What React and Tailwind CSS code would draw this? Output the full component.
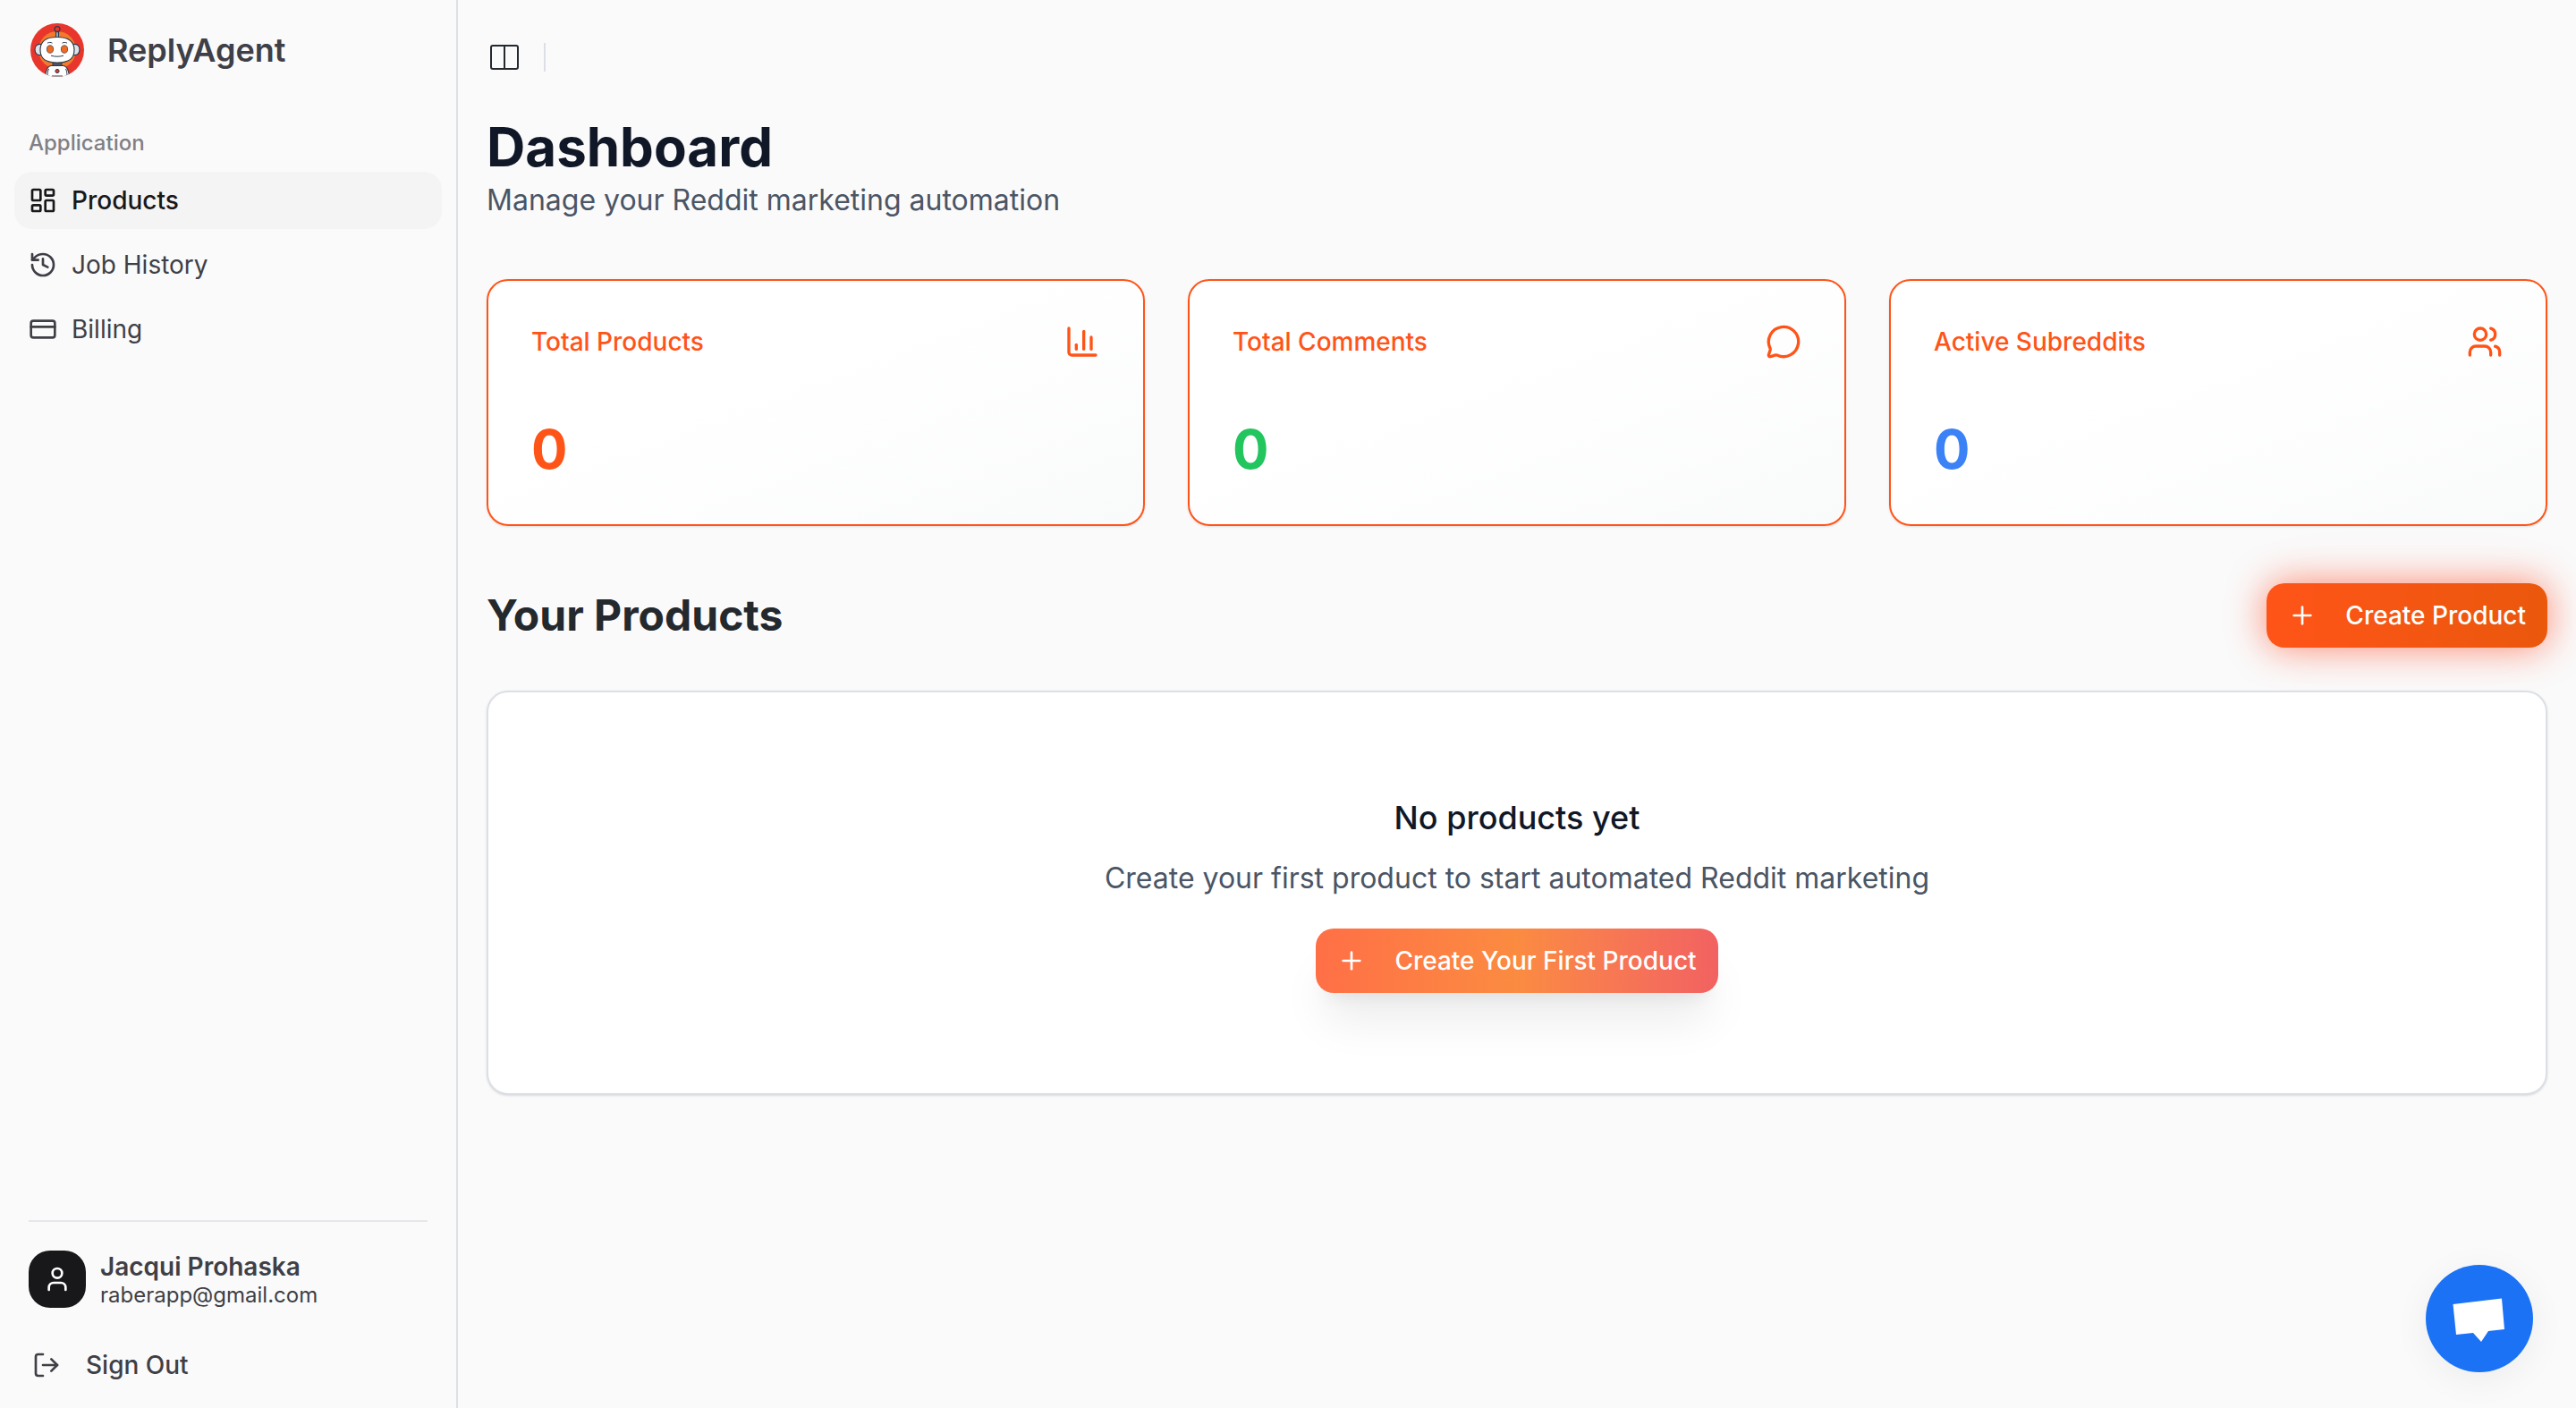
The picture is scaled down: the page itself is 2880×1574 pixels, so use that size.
import {
  ChartColumn,
  CreditCard,
  History,
  LayoutDashboard,
  LogOut,
  MessageCircle,
  Plus,
  User,
  Users,
} from 'lucide-react';

const navItems = [
  { title: 'Products', icon: LayoutDashboard, active: true },
  { title: 'Job History', icon: History },
  { title: 'Billing', icon: CreditCard },
];

const stats = [
  { title: 'Total Products', value: 0, icon: ChartColumn, color: 'text-[#ff5418]' },
  { title: 'Total Comments', value: 0, icon: MessageCircle, color: 'text-[#22c55e]' },
  { title: 'Active Subreddits', value: 0, icon: Users, color: 'text-[#3b82f6]' },
];

const Logo = () => (
  <svg className="size-16" viewBox="0 0 64 64" aria-hidden="true">
    <defs>
      <clipPath id="logo-clip">
        <circle cx="32" cy="32" r="30" />
      </clipPath>
    </defs>
    <g clipPath="url(#logo-clip)" stroke="#2f3a48">
      <rect width="64" height="64" fill="#e8362d" stroke="none" />
      <circle cx="32" cy="32" r="21" fill="#f37a2c" stroke="none" />
      <path d="M30.500 11h3v7h-3z" fill="#9aa5b1" strokeWidth="1" />
      <circle cx="32" cy="8.600" r="3" fill="#e8362d" strokeWidth="1.200" />
      <path d="M27 45h10v6H27z" fill="#4b5563" strokeWidth="1" />
      <path d="M18.500 64c0-8 2.500-14.500 7-14.500h13c4.500 0 7 6.500 7 14.500z" fill="#fff" strokeWidth="1.200" />
      <path d="M22.500 53c-1.500 3-1.500 6-1.500 10M41.500 53c1.500 3 1.500 6 1.500 10M26 61h12" fill="none" strokeWidth="1" />
      <circle cx="32" cy="55.500" r="2.100" fill="#e8362d" strokeWidth="1" />
      <path d="M14 25.500c-4-.5-7 1.500-7 6s3 6.500 7 6z" fill="#dfe3e8" strokeWidth="1.200" />
      <path d="M50 25.500c4-.5 7 1.500 7 6s-3 6.500-7 6z" fill="#dfe3e8" strokeWidth="1.200" />
      <path
        d="M32 17.500c13 0 19 4.500 19 14.500S45 46 32 46s-19-4-19-14 6-14.500 19-14.500z"
        fill="#fff"
        strokeWidth="1.200"
      />
      <ellipse cx="24" cy="31" rx="3.600" ry="4.200" fill="#f26a21" stroke="#6b5a58" strokeWidth="1" />
      <ellipse cx="40" cy="31" rx="3.600" ry="4.200" fill="#f26a21" stroke="#6b5a58" strokeWidth="1" />
      <path
        d="M21 24.200c1.500-1 4-1 5.500 0M37.500 24.200c1.500-1 4-1 5.500 0M25 38.200c4 1.300 10 1.300 14 0"
        fill="none"
        strokeWidth="1"
      />
    </g>
  </svg>
);

const Sidebar = () => (
  <aside className="flex w-128 shrink-0 flex-col border-r-2 border-[#dce0e6]">
    <div className="flex h-28 items-center gap-6 px-8">
      <Logo />
      <span className="text-4xl font-semibold text-zinc-700">ReplyAgent</span>
    </div>

    <nav className="flex flex-col p-4" aria-label="Application">
      <div className="flex h-16 items-center px-4 text-2xl font-medium text-[#808085]">Application</div>
      <ul className="flex flex-col gap-2">
        {navItems.map((item) => (
          <li key={item.title}>
            <a
              href="#"
              className={
                item.active
                  ? 'flex h-16 items-center gap-4 rounded-[20px] bg-zinc-100 px-4 text-[28px] font-medium text-zinc-900'
                  : 'flex h-16 items-center gap-4 rounded-[20px] px-4 text-[28px] text-zinc-700'
              }
            >
              <item.icon className="size-8" />
              {item.title}
            </a>
          </li>
        ))}
      </ul>
    </nav>

    <div className="mx-8 mt-auto flex flex-col border-t-2 border-gray-200 pt-8 pb-4">
      <div className="flex items-center gap-4">
        <div className="flex size-16 items-center justify-center rounded-[24px] bg-zinc-900 text-white">
          <User className="size-8" />
        </div>
        <div className="flex flex-col text-zinc-700">
          <span className="text-[28px] leading-9 font-semibold">Jacqui Prohaska</span>
          <span className="text-2xl leading-7">raberapp@gmail.com</span>
        </div>
      </div>
      <button className="mt-8 flex h-16 items-center gap-7 px-1 text-[28px] font-medium text-zinc-700">
        <LogOut className="size-8" />
        Sign Out
      </button>
    </div>
  </aside>
);

const StatCard = ({ stat }) => (
  <div className="flex flex-col gap-16 rounded-3xl border-2 border-[#ff5418] bg-linear-to-br from-white from-40% to-[#f9fbfa] p-12 shadow-sm">
    <div className="flex items-center justify-between text-[#ff5418]">
      <h3 className="text-[28px] leading-10 font-medium">{stat.title}</h3>
      <stat.icon className="size-10" />
    </div>
    <div className={`text-6xl leading-[72px] font-bold ${stat.color}`}>{stat.value}</div>
  </div>
);

const App = () => (
  <div className="flex min-h-screen bg-[#fafafa] font-['Inter',sans-serif]">
    <Sidebar />

    <main className="flex min-w-0 flex-1 flex-col px-8">
      <header className="flex h-32 items-center gap-6">
        <button aria-label="Toggle Sidebar" className="text-[#24292e]">
          <svg className="size-10" viewBox="0 0 40 40" fill="none" stroke="currentColor" strokeWidth="2">
            <rect x="5" y="7" width="30" height="26" rx="2" />
            <path d="M20 7v26" />
          </svg>
        </button>
        <div className="h-8 w-0.5 bg-[#dce0e6]" />
      </header>

      <div className="mb-16">
        <h1 className="text-6xl leading-[72px] font-bold text-gray-900">Dashboard</h1>
        <p className="text-[32px] leading-12 text-gray-600">Manage your Reddit marketing automation</p>
      </div>

      <div className="mb-16 grid grid-cols-3 gap-12">
        {stats.map((stat) => (
          <StatCard key={stat.title} stat={stat} />
        ))}
      </div>

      <div className="mb-12 flex items-center justify-between">
        <h2 className="text-5xl leading-16 font-bold text-[#24292e]">Your Products</h2>
        <button className="flex h-18 items-center gap-8 rounded-[20px] bg-linear-to-r from-[#ff5418] to-[#ea580c] px-6 text-[28px] font-medium text-white shadow-[0_0_40px_rgba(255,69,30,0.6),0_0_80px_rgba(255,69,30,0.06)]">
          <Plus className="size-8" />
          Create Product
        </button>
      </div>

      <section className="flex flex-col items-center rounded-3xl border-2 border-[#dce0e6] bg-white p-28 shadow-sm">
        <h3 className="mb-4 text-4xl leading-14 font-medium text-gray-900">No products yet</h3>
        <p className="mb-8 text-[32px] leading-12 text-gray-600">
          Create your first product to start automated Reddit marketing
        </p>
        <button className="flex h-18 items-center gap-8 rounded-[20px] bg-linear-to-r from-[#ff6f46] via-[#fb8b41] to-[#f26161] px-6 text-[28px] font-medium text-white shadow-[0_40px_50px_-10px_rgba(0,0,0,0.08),0_16px_20px_-12px_rgba(0,0,0,0.08)]">
          <Plus className="size-8" />
          Create Your First Product
        </button>
      </section>
    </main>

    <button
      aria-label="Open chat"
      className="fixed right-12 bottom-10 flex size-30 items-center justify-center rounded-full bg-[#1b72f5] shadow-[0_8px_40px_rgba(0,0,0,0.06)]"
    >
      <svg className="size-30" viewBox="0 0 120 120" fill="#fff">
        <path d="M30.500 44 85 37.500l3 34.500-18 2-8 12-9-10-19 2z" />
      </svg>
    </button>
  </div>
);

export default App;
